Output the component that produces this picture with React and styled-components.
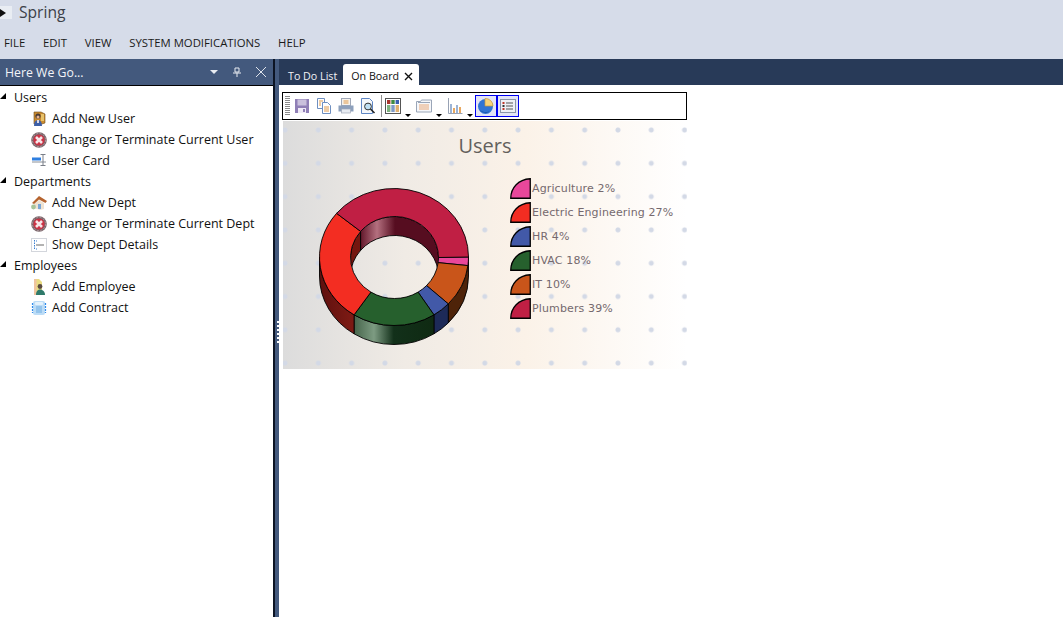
import React from 'react';
import styled, { createGlobalStyle } from 'styled-components';

const GlobalStyle = createGlobalStyle`
  html, body {
    margin: 0;
    padding: 0;
    height: 100%;
    background: #fff;
    overflow: hidden;
  }
  #root {
    height: 100%;
  }
`;

const Page = styled.div`
  display: flex;
  flex-direction: column;
  height: 617px;
  font-family: 'Open Sans', 'Noto Sans', sans-serif;
`;

const TopArea = styled.header`
  height: 59px;
  background: #d6dce9;
  flex: none;
`;

const TitleRow = styled.div`
  display: flex;
  align-items: center;
  height: 24px;
  gap: 7px;
`;

const AppIcon = styled.div`
  width: 12px;
  height: 13px;
  margin-top: 1px;
  background: #e9edf3;
  display: flex;
  align-items: center;

  &::before {
    content: '';
    border-left: 6px solid #111;
    border-top: 4px solid transparent;
    border-bottom: 4px solid transparent;
  }
`;

const AppTitle = styled.span`
  font-size: 15.6px;
  color: #3c4048;
`;

const MenuBar = styled.nav`
  display: flex;
  gap: 17.8px;
  padding: 9px 0 0 4px;
  font-size: 11.33px;
  line-height: 20px;
  color: #1a1a1a;
`;

const Body = styled.div`
  flex: 1;
  display: flex;
  min-height: 0;
`;

const SidePanel = styled.aside`
  width: 273px;
  flex: none;
  display: flex;
  flex-direction: column;
`;

const PanelHeader = styled.div`
  height: 26px;
  flex: none;
  background: #43597d;
  color: #f2f4f8;
  display: flex;
  align-items: center;
  padding: 0 6px 0 5px;
  font-size: 12.3px;
  box-sizing: border-box;
`;

const PanelTitle = styled.span`
  flex: 1;
`;

const HeaderButtons = styled.div`
  display: flex;
  align-items: center;
  gap: 13px;

  svg {
    display: block;
  }
`;

const TreeArea = styled.div`
  flex: 1;
  background: #fff;
  border-top: 1px solid #000;
  padding-top: 1px;
`;

const TreeRow = styled.div`
  display: flex;
  align-items: center;
  height: 21px;
  padding-left: ${(p) => (p.$child ? '31px' : '0')};
  font-size: 12.5px;
  color: #111;
  white-space: nowrap;
`;

const Caret = styled.span`
  width: 0;
  height: 0;
  border-left: 6px solid transparent;
  border-bottom: 6px solid #000;
  margin: 0 8px 4px 0;
`;

const TreeIcon = styled.span`
  width: 16px;
  height: 16px;
  margin-right: 5px;
  flex: none;

  svg {
    display: block;
  }
`;

const Splitter = styled.div`
  width: 6px;
  flex: none;
  background: #43597d;
  border-left: 2px solid #0c1424;
  box-sizing: border-box;
  position: relative;
`;

const Grip = styled.div`
  position: absolute;
  right: 0;
  top: 262px;
  width: 2px;
  height: 22px;
  background: repeating-linear-gradient(to bottom, #fff 0 2px, transparent 2px 4px);
`;

const Main = styled.main`
  flex: 1;
  display: flex;
  flex-direction: column;
  min-width: 0;
`;

const TabBar = styled.div`
  height: 26px;
  flex: none;
  background: #283a58;
  display: flex;
  align-items: flex-end;
  padding-left: 4px;
`;

const Tab = styled.div`
  height: 21px;
  box-sizing: border-box;
  display: flex;
  align-items: center;
  gap: 5px;
  padding: 3px 6px 0 ${(p) => (p.$active ? '8px' : '5px')};
  font-size: 10.7px;
  color: ${(p) => (p.$active ? '#111' : '#f0f2f6')};
  background: ${(p) => (p.$active ? '#fff' : 'transparent')};
  border-radius: 3px 3px 0 0;
`;

const Content = styled.div`
  flex: 1;
  background: #fff;
  padding: 7px 0 0 3px;
`;

const Toolbar = styled.div`
  width: 405px;
  height: 28px;
  box-sizing: border-box;
  border: 1px solid #000;
  display: flex;
  align-items: center;
  padding-left: 2px;
`;

const Gripper = styled.span`
  width: 5px;
  height: 20px;
  margin-right: 1px;
  background: repeating-linear-gradient(to bottom, #8a8a8a 0 1px, transparent 1px 2px);
`;

const ToolIcon = styled.span`
  width: 22px;
  height: 22px;
  display: flex;
  align-items: center;
  justify-content: center;
  box-sizing: border-box;
  flex: none;
  border: ${(p) => (p.$active ? '1px solid #0000f0' : 'none')};
  background: ${(p) => (p.$active ? '#e2e4f6' : 'transparent')};

  svg {
    display: block;
  }
`;

const ToolSep = styled.span`
  width: 1px;
  height: 22px;
  background: #8d8d8d;
  margin: 0 0 0 2px;
`;

const DropArrow = styled.span`
  width: 0;
  height: 0;
  border-left: 3px solid transparent;
  border-right: 3px solid transparent;
  border-top: 3px solid #000;
  align-self: flex-end;
  margin: 0 2px 2px 1px;
`;

const ChartPanel = styled.section`
  width: 404px;
  height: 248px;
  margin: 1px 0 0 1px;
  box-sizing: border-box;
  background-color: #fff;
  background-image:
    radial-gradient(circle, #d3d9e6 0 2px, transparent 3px),
    linear-gradient(to right, #dcdcdc 0%, #f0ebe5 30%, #fbf2e8 60%, #fff 100%);
  background-size: 33.3px 33.3px, 100% 100%;
  background-position: -14.65px -7.65px, 0 0;
  display: grid;
  grid-template-rows: 47px 1fr;
  grid-template-columns: 227px 1fr;
`;

const ChartTitle = styled.h2`
  grid-column: 1 / -1;
  margin: 0;
  padding-top: 10px;
  text-align: center;
  font-size: 20px;
  font-weight: 400;
  color: #63605c;
  line-height: 30px;
`;

const DonutWrap = styled.div`
  padding: 20px 0 0 36px;

  svg {
    display: block;
  }
`;

const Legend = styled.ul`
  list-style: none;
  margin: 0;
  padding: 8px 0 0 0;
  display: flex;
  flex-direction: column;
`;

const LegendItem = styled.li`
  height: 24px;
  display: flex;
  align-items: center;
  gap: 1px;
  font-family: 'DejaVu Sans', Verdana, sans-serif;
  font-size: 11px;
  letter-spacing: 0.13px;
  color: #75696e;
  white-space: nowrap;

  svg {
    display: block;
    flex: none;
  }
`;

const legend = [
  { name: 'Agriculture 2%', color: '#e9479b' },
  { name: 'Electric Engineering 27%', color: '#f32d22' },
  { name: 'HR 4%', color: '#4259a8' },
  { name: 'HVAC 18%', color: '#26602d' },
  { name: 'IT 10%', color: '#c9551a' },
  { name: 'Plumbers 39%', color: '#c01f44' },
];

const tree = [
  { name: 'Users', items: [['Add New User', 'user'], ['Change or Terminate Current User', 'stop'], ['User Card', 'card']] },
  { name: 'Departments', items: [['Add New Dept', 'house'], ['Change or Terminate Current Dept', 'stop'], ['Show Dept Details', 'details']] },
  { name: 'Employees', items: [['Add Employee', 'employee'], ['Add Contract', 'contract']] },
];

const treeIcons = {
  user: (
    <svg width="16" height="16" viewBox="0 0 16 16">
      <path d="M3 1h7l4 2v9l-3 1H3z" fill="#c98a2e" stroke="#6b4a1c" strokeWidth="0.6" />
      <rect x="10" y="3" width="3" height="7" fill="#e8c26a" />
      <circle cx="7" cy="5" r="2.6" fill="#4a3a34" />
      <circle cx="7" cy="6" r="1.5" fill="#e3b394" />
      <path d="M3 15c0-4 1.5-6 4-6s4 2 4 6z" fill="#3c5fa8" />
      <rect x="6" y="9" width="2" height="3" fill="#d8d8e6" />
    </svg>
  ),
  stop: (
    <svg width="16" height="16" viewBox="0 0 16 16">
      <circle cx="8" cy="8" r="7.8" fill="#7a6469" />
      <circle cx="8" cy="8" r="6.6" fill="none" stroke="#b8a5aa" strokeWidth="0.8" strokeDasharray="2 1.5" />
      <circle cx="8" cy="8" r="5.6" fill="#cc3345" />
      <path d="M5 5l6 6M11 5l-6 6" stroke="#f6e6e8" strokeWidth="2.6" />
    </svg>
  ),
  card: (
    <svg width="16" height="16" viewBox="0 0 16 16">
      <rect x="1" y="4.5" width="9" height="3" fill="#2f7fe0" />
      <rect x="1" y="8.5" width="14" height="1" fill="#8a8f98" />
      <path d="M9.5 1.5h5M12 1.5v11M9.5 12.5h5" stroke="#7a7f88" fill="none" />
    </svg>
  ),
  house: (
    <svg width="16" height="16" viewBox="0 0 16 16">
      <path d="M3 9l5-4 5 3v6l-4 1-6-2z" fill="#efe3d2" />
      <path d="M1 8L8 1l8 5-1.5 2L8 4.5 3 9z" fill="#b5632e" />
      <rect x="7" y="9" width="3" height="5" fill="#7aa6d6" />
      <circle cx="2.5" cy="12" r="2.4" fill="#a8c49a" />
    </svg>
  ),
  details: (
    <svg width="16" height="16" viewBox="0 0 16 16">
      <rect x="0.5" y="1.5" width="15" height="13" fill="#fff" stroke="#d3d6dc" />
      <path d="M3.5 3v9" stroke="#3a7fd0" strokeDasharray="1.5 1" />
      <path d="M5 8h8" stroke="#666" />
      <path d="M5 4h1M5 12h1" stroke="#3a7fd0" />
    </svg>
  ),
  employee: (
    <svg width="16" height="16" viewBox="0 0 16 16">
      <path d="M3 0h5l3 3v13H3z" fill="#e9dc83" />
      <rect x="3" y="0" width="2.5" height="16" fill="#f0c4a0" />
      <circle cx="9" cy="7.5" r="2.4" fill="#5a4a40" />
      <path d="M5 16c0-4 2-5.5 4-5.5s5 1.5 5 5.5z" fill="#2f7a6a" />
    </svg>
  ),
  contract: (
    <svg width="16" height="16" viewBox="0 0 16 16">
      <rect x="2" y="1" width="12" height="14" rx="2" fill="#bcdcf6" />
      <path d="M1.5 3v10M14.5 3v10" stroke="#2f8aec" strokeWidth="1.2" strokeDasharray="2 1" />
      <rect x="4" y="2" width="8" height="3" rx="1" fill="#e4f2fc" />
      <rect x="5" y="6" width="6" height="7" fill="#94c4ec" />
    </svg>
  ),
};

// chart geometry, in the coordinates of the svg
const CX = 75;
const CY = 69;
const RX = 74.5;
const RY = 68.5;
const HX = 44;
const HY = 41;
const HCX = 75.5;
const HCY = 69.5;
const DEPTH = 19;

const rad = (a) => (a * Math.PI) / 180;
const pt = (cx, cy, rx, ry, a) => [cx + rx * Math.cos(rad(a)), cy + ry * Math.sin(rad(a))];
const fmt = (p) => `${p[0].toFixed(2)} ${p[1].toFixed(2)}`;

const ringPath = (a, b) => {
  const large = b - a > 180 ? 1 : 0;
  return [
    `M${fmt(pt(CX, CY, RX, RY, a))}`,
    `A${RX} ${RY} 0 ${large} 1 ${fmt(pt(CX, CY, RX, RY, b))}`,
    `L${fmt(pt(HCX, HCY, HX, HY, b))}`,
    `A${HX} ${HY} 0 ${large} 0 ${fmt(pt(HCX, HCY, HX, HY, a))}`,
    'Z',
  ].join(' ');
};

const sidePath = (cx, cy, rx, ry, a, b) => {
  const large = b - a > 180 ? 1 : 0;
  return [
    `M${fmt(pt(cx, cy, rx, ry, a))}`,
    `A${rx} ${ry} 0 ${large} 1 ${fmt(pt(cx, cy, rx, ry, b))}`,
    `L${fmt(pt(cx, cy + DEPTH, rx, ry, b))}`,
    `A${rx} ${ry} 0 ${large} 0 ${fmt(pt(cx, cy + DEPTH, rx, ry, a))}`,
    'Z',
  ].join(' ');
};

const segments = [
  { from: 0, to: 7.2, color: '#e9479b' },
  { from: 7.2, to: 43.2, color: '#c9551a' },
  { from: 43.2, to: 57.6, color: '#4259a8' },
  { from: 57.6, to: 122.4, color: '#26602d' },
  { from: 122.4, to: 219.6, color: '#f32d22' },
  { from: 219.6, to: 360, color: '#c01f44' },
];

const Donut = () => (
  <svg width="152" height="160" viewBox="0 0 152 160">
    <defs>
      <linearGradient id="wallGreen" gradientUnits="userSpaceOnUse" x1="32" x2="114" y1="0" y2="0">
        <stop offset="0" stopColor="#3d5c42" />
        <stop offset="0.28" stopColor="#7d9b82" />
        <stop offset="0.52" stopColor="#12301a" />
        <stop offset="1" stopColor="#0f2a12" />
      </linearGradient>
      <linearGradient id="wallRed" gradientUnits="userSpaceOnUse" x1="0" x2="32" y1="0" y2="0">
        <stop offset="0" stopColor="#5e100e" />
        <stop offset="1" stopColor="#7c1a14" />
      </linearGradient>
      <linearGradient id="wallCrimson" gradientUnits="userSpaceOnUse" x1="40" x2="76" y1="0" y2="0">
        <stop offset="0" stopColor="#5a0e22" />
        <stop offset="0.5" stopColor="#b4707f" />
        <stop offset="1" stopColor="#560d20" />
      </linearGradient>
      <clipPath id="holeClip">
        <ellipse cx={HCX} cy={HCY} rx={HX} ry={HY} />
      </clipPath>
    </defs>

    <g stroke="#000" strokeWidth="0.9">
      <path d={sidePath(CX, CY, RX, RY, 0, 43.2)} fill="#4e2309" />
      <path d={sidePath(CX, CY, RX, RY, 43.2, 57.6)} fill="#1d2a58" />
      <path d={sidePath(CX, CY, RX, RY, 57.6, 122.4)} fill="url(#wallGreen)" />
      <path d={sidePath(CX, CY, RX, RY, 122.4, 180)} fill="url(#wallRed)" />
      <g clipPath="url(#holeClip)">
        <path d={sidePath(HCX, HCY, HX, HY, 180, 219.6)} fill="#74160f" />
        <path d={sidePath(HCX, HCY, HX, HY, 219.6, 360)} fill="url(#wallCrimson)" />
      </g>
      {segments.map((s) => (
        <path key={s.from} d={ringPath(s.from, s.to)} fill={s.color} />
      ))}
    </g>
  </svg>
);

const toolIcons = {
  save: (
    <svg width="16" height="16" viewBox="0 0 16 16">
      <path d="M1 1h14v14H1z" fill="#8f7fb6" />
      <rect x="3.5" y="1.5" width="9" height="6" fill="#c9c0dc" />
      <rect x="4" y="10" width="8" height="5" fill="#efeaf6" />
      <rect x="9" y="11" width="2" height="3" fill="#8f7fb6" />
    </svg>
  ),
  copy: (
    <svg width="16" height="16" viewBox="0 0 16 16">
      <path d="M1.5 0.5h7v10h-7z" fill="#fff" stroke="#6f8fc0" />
      <path d="M6.5 4.5h5l3 3v8h-8z" fill="#fff" stroke="#6f8fc0" />
      <path d="M3 3h4M3 5h2M3 7h2M8 9h5M8 11h5M8 13h5" stroke="#e09a4a" />
    </svg>
  ),
  print: (
    <svg width="16" height="16" viewBox="0 0 16 16">
      <rect x="3.5" y="0.5" width="9" height="7" fill="#f6f2ec" stroke="#a0a8b8" />
      <path d="M5.5 3h5M5.5 5h5" stroke="#e09a4a" />
      <path d="M0.5 7.5h15v6h-15z" fill="#8da0bc" />
      <rect x="3.5" y="11" width="9" height="4" fill="#e8ecf2" stroke="#a0a8b8" strokeWidth="0.7" />
    </svg>
  ),
  preview: (
    <svg width="16" height="16" viewBox="0 0 16 16">
      <path d="M1.5 0.5h8l3 3v12h-11z" fill="#f4f7fb" stroke="#5f86c4" />
      <circle cx="8" cy="8.5" r="3.4" fill="#bfe0f4" stroke="#333" />
      <path d="M10.5 11l4 4" stroke="#222" strokeWidth="1.6" />
    </svg>
  ),
  columns: (
    <svg width="16" height="16" viewBox="0 0 16 16">
      <rect x="0.5" y="0.5" width="15" height="15" fill="#fff" stroke="#555" />
      <rect x="2" y="2" width="3.4" height="4" fill="#a8352e" />
      <rect x="6.3" y="2" width="3.4" height="4" fill="#3f8a40" />
      <rect x="10.6" y="2" width="3.4" height="4" fill="#3a5fb0" />
      <rect x="2" y="7" width="3.4" height="7" fill="#7fb27f" />
      <rect x="6.3" y="7" width="3.4" height="7" fill="#7f9ac8" />
      <rect x="10.6" y="7" width="3.4" height="7" fill="#e0b070" />
    </svg>
  ),
  form: (
    <svg width="16" height="16" viewBox="0 0 16 16">
      <path d="M0.5 3.5h4l1-1.5h10v12H0.5z" fill="#f6f7fa" stroke="#9aa6b8" />
      <path d="M2 4.5h12" stroke="#9aa6b8" />
      <path d="M3 7h10M3 9h10M3 11h10" stroke="#e8a878" />
    </svg>
  ),
  bars: (
    <svg width="16" height="16" viewBox="0 0 16 16">
      <path d="M1.5 0v15.5h14" fill="none" stroke="#98a2b4" />
      <rect x="3" y="6" width="2" height="9" fill="#9cb4d6" />
      <rect x="6" y="10" width="2" height="5" fill="#e8a860" />
      <rect x="9" y="7" width="2" height="8" fill="#9cb4d6" />
      <rect x="12" y="9" width="2" height="6" fill="#e8a860" />
    </svg>
  ),
  pie: (
    <svg width="18" height="18" viewBox="0 0 18 18">
      <circle cx="8.5" cy="9.5" r="7.5" fill="#2f74d4" />
      <path d="M8 9V1.5a7.5 7.5 0 0 1 8 7.5z" fill="#f5d27a" stroke="#c9983a" strokeWidth="0.7" />
      <path d="M3 13c2 2 7 3 10 1-3 3-8 2-10-1z" fill="#1c4f9e" />
    </svg>
  ),
  list: (
    <svg width="16" height="16" viewBox="0 0 16 16">
      <rect x="0.5" y="1.5" width="15" height="13" fill="#eef0f6" stroke="#8a94a8" />
      <rect x="2.5" y="4" width="2" height="2" fill="#c0392b" />
      <rect x="2.5" y="7" width="2" height="2" fill="#333" />
      <rect x="2.5" y="10" width="2" height="2" fill="#c0392b" />
      <path d="M6 5h7M6 8h7M6 11h7" stroke="#555" />
    </svg>
  ),
};

export default function App() {
  return (
    <Page>
      <GlobalStyle />
      <TopArea>
        <TitleRow>
          <AppIcon />
          <AppTitle>Spring</AppTitle>
        </TitleRow>
        <MenuBar>
          <span>FILE</span>
          <span>EDIT</span>
          <span>VIEW</span>
          <span>SYSTEM MODIFICATIONS</span>
          <span>HELP</span>
        </MenuBar>
      </TopArea>
      <Body>
        <SidePanel>
          <PanelHeader>
            <PanelTitle>Here We Go...</PanelTitle>
            <HeaderButtons>
              <svg width="10" height="10" viewBox="0 0 10 10">
                <path d="M1 3h8L5 7z" fill="#e8ecf2" />
              </svg>
              <svg width="10" height="10" viewBox="0 0 10 10">
                <path d="M3 1h4v4H3zM1 6h8M5 6v4" fill="none" stroke="#e8ecf2" />
              </svg>
              <svg width="12" height="12" viewBox="0 0 12 12">
                <path d="M1 1l10 10M11 1L1 11" stroke="#dfe4ec" />
              </svg>
            </HeaderButtons>
          </PanelHeader>
          <TreeArea>
            {tree.map((group) => (
              <React.Fragment key={group.name}>
                <TreeRow>
                  <Caret />
                  {group.name}
                </TreeRow>
                {group.items.map(([label, icon]) => (
                  <TreeRow $child key={label}>
                    <TreeIcon>{treeIcons[icon]}</TreeIcon>
                    {label}
                  </TreeRow>
                ))}
              </React.Fragment>
            ))}
          </TreeArea>
        </SidePanel>
        <Splitter>
          <Grip />
        </Splitter>
        <Main>
          <TabBar>
            <Tab>To Do List</Tab>
            <Tab $active>
              On Board
              <svg width="9" height="9" viewBox="0 0 9 9">
                <path d="M1 1l7 7M8 1L1 8" stroke="#111" strokeWidth="1.4" />
              </svg>
            </Tab>
          </TabBar>
          <Content>
            <Toolbar>
              <Gripper />
              <ToolIcon>{toolIcons.save}</ToolIcon>
              <ToolIcon>{toolIcons.copy}</ToolIcon>
              <ToolIcon>{toolIcons.print}</ToolIcon>
              <ToolIcon>{toolIcons.preview}</ToolIcon>
              <ToolSep />
              <ToolIcon>{toolIcons.columns}</ToolIcon>
              <DropArrow />
              <ToolIcon>{toolIcons.form}</ToolIcon>
              <DropArrow />
              <ToolIcon>{toolIcons.bars}</ToolIcon>
              <DropArrow />
              <ToolIcon $active>{toolIcons.pie}</ToolIcon>
              <ToolIcon $active>{toolIcons.list}</ToolIcon>
            </Toolbar>
            <ChartPanel>
              <ChartTitle>Users</ChartTitle>
              <DonutWrap>
                <Donut />
              </DonutWrap>
              <Legend>
                {legend.map((item) => (
                  <LegendItem key={item.name}>
                    <svg width="21" height="21" viewBox="0 0 21 21">
                      <path d="M0.75 20.25C0.75 10 8 1.5 20.25 0.75V20.25Z" fill={item.color} stroke="#000" strokeWidth="1.3" />
                    </svg>
                    {item.name}
                  </LegendItem>
                ))}
              </Legend>
            </ChartPanel>
          </Content>
        </Main>
      </Body>
    </Page>
  );
}
